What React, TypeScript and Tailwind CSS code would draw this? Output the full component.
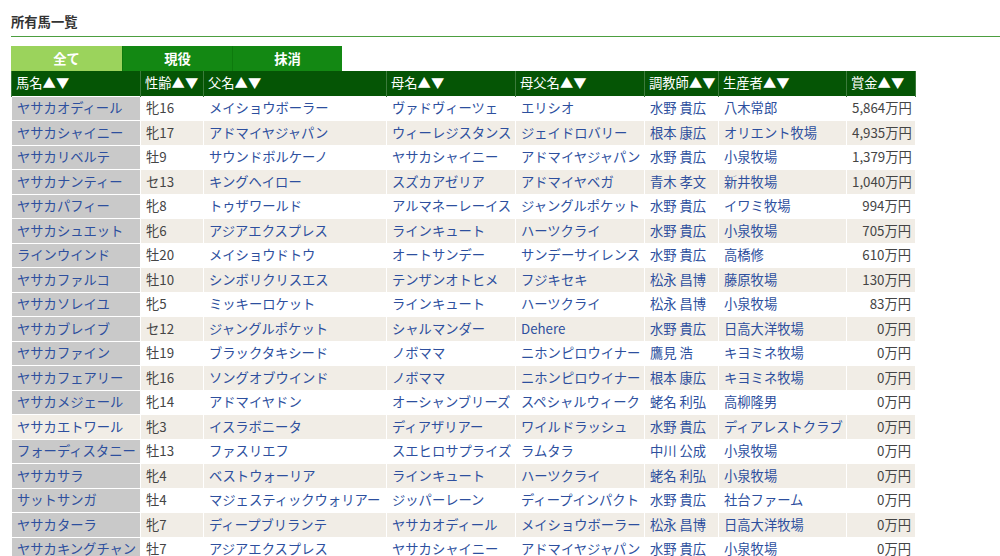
import React from "react";

type Horse = {
  name: string;
  sexAge: string;
  sire: string;
  dam: string;
  damSire: string;
  trainer: string;
  breeder: string;
  prize: string;
  plainName?: boolean;
};

const horses: Horse[] = [
  { name: "ヤサカオディール", sexAge: "牝16", sire: "メイショウボーラー", dam: "ヴァドヴィーツェ", damSire: "エリシオ", trainer: "水野 貴広", breeder: "八木常郎", prize: "5,864万円" },
  { name: "ヤサカシャイニー", sexAge: "牝17", sire: "アドマイヤジャパン", dam: "ウィーレジスタンス", damSire: "ジェイドロバリー", trainer: "根本 康広", breeder: "オリエント牧場", prize: "4,935万円" },
  { name: "ヤサカリベルテ", sexAge: "牡9", sire: "サウンドボルケーノ", dam: "ヤサカシャイニー", damSire: "アドマイヤジャパン", trainer: "水野 貴広", breeder: "小泉牧場", prize: "1,379万円" },
  { name: "ヤサカナンティー", sexAge: "セ13", sire: "キングヘイロー", dam: "スズカアゼリア", damSire: "アドマイヤベガ", trainer: "青木 孝文", breeder: "新井牧場", prize: "1,040万円" },
  { name: "ヤサカパフィー", sexAge: "牝8", sire: "トゥザワールド", dam: "アルマネーレーイス", damSire: "ジャングルポケット", trainer: "水野 貴広", breeder: "イワミ牧場", prize: "994万円" },
  { name: "ヤサカシュエット", sexAge: "牝6", sire: "アジアエクスプレス", dam: "ラインキュート", damSire: "ハーツクライ", trainer: "水野 貴広", breeder: "小泉牧場", prize: "705万円" },
  { name: "ラインウインド", sexAge: "牡20", sire: "メイショウドトウ", dam: "オートサンデー", damSire: "サンデーサイレンス", trainer: "水野 貴広", breeder: "高橋修", prize: "610万円" },
  { name: "ヤサカファルコ", sexAge: "牡10", sire: "シンボリクリスエス", dam: "テンザンオトヒメ", damSire: "フジキセキ", trainer: "松永 昌博", breeder: "藤原牧場", prize: "130万円" },
  { name: "ヤサカソレイユ", sexAge: "牝5", sire: "ミッキーロケット", dam: "ラインキュート", damSire: "ハーツクライ", trainer: "松永 昌博", breeder: "小泉牧場", prize: "83万円" },
  { name: "ヤサカブレイブ", sexAge: "セ12", sire: "ジャングルポケット", dam: "シャルマンダー", damSire: "Dehere", trainer: "水野 貴広", breeder: "日高大洋牧場", prize: "0万円" },
  { name: "ヤサカファイン", sexAge: "牡19", sire: "ブラックタキシード", dam: "ノボママ", damSire: "ニホンピロウイナー", trainer: "鷹見 浩", breeder: "キヨミネ牧場", prize: "0万円" },
  { name: "ヤサカフェアリー", sexAge: "牝16", sire: "ソングオブウインド", dam: "ノボママ", damSire: "ニホンピロウイナー", trainer: "根本 康広", breeder: "キヨミネ牧場", prize: "0万円" },
  { name: "ヤサカメジェール", sexAge: "牝14", sire: "アドマイヤドン", dam: "オーシャンブリーズ", damSire: "スペシャルウィーク", trainer: "蛯名 利弘", breeder: "高柳隆男", prize: "0万円" },
  { name: "ヤサカエトワール", sexAge: "牝3", sire: "イスラボニータ", dam: "ディアザリアー", damSire: "ワイルドラッシュ", trainer: "水野 貴広", breeder: "ディアレストクラブ", prize: "0万円", plainName: true },
  { name: "フォーディスタニー", sexAge: "牡13", sire: "ファスリエフ", dam: "スエヒロサプライズ", damSire: "ラムタラ", trainer: "中川 公成", breeder: "小泉牧場", prize: "0万円" },
  { name: "ヤサカサラ", sexAge: "牝4", sire: "ベストウォーリア", dam: "ラインキュート", damSire: "ハーツクライ", trainer: "蛯名 利弘", breeder: "小泉牧場", prize: "0万円" },
  { name: "サットサンガ", sexAge: "牡4", sire: "マジェスティックウォリアー", dam: "ジッパーレーン", damSire: "ディープインパクト", trainer: "水野 貴広", breeder: "社台ファーム", prize: "0万円" },
  { name: "ヤサカターラ", sexAge: "牝7", sire: "ディープブリランテ", dam: "ヤサカオディール", damSire: "メイショウボーラー", trainer: "松永 昌博", breeder: "日高大洋牧場", prize: "0万円" },
  { name: "ヤサカキングチャン", sexAge: "牡7", sire: "アジアエクスプレス", dam: "ヤサカシャイニー", damSire: "アドマイヤジャパン", trainer: "水野 貴広", breeder: "小泉牧場", prize: "0万円" },
];

// column widths taken from the screenshot
const columns = [
  { label: "馬名", width: "w-[129px]" },
  { label: "性齢", width: "w-[63px]" },
  { label: "父名", width: "w-[183px]" },
  { label: "母名", width: "w-[129px]" },
  { label: "母父名", width: "w-[129px]" },
  { label: "調教師", width: "w-[74px]" },
  { label: "生産者", width: "w-[128px]" },
  { label: "賞金", width: "w-[69px]" },
];

const tabs = [
  { label: "全て", active: true },
  { label: "現役", active: false },
  { label: "抹消", active: false },
];

const cell = "h-[24.5px] p-0 px-[5px] border border-white whitespace-nowrap overflow-hidden";
const link = "text-[#2d4f9e]";

export default function App() {
  return (
    <div className="min-h-screen bg-white text-[13.3px] text-[#444] font-['Noto_Sans_CJK_JP','Noto_Sans',sans-serif]">
      <div className="pl-[11px] pt-[12px]">
        <h2 className="h-[20px] leading-[20px] font-bold text-[#333]">所有馬一覧</h2>
        <div className="mt-[4px] h-px bg-[#4c9e3f]" />

        {/* Tabs */}
        <div className="mt-[9px] flex">
          {tabs.map((tab) => (
            <div
              key={tab.label}
              className={
                tab.active
                  ? "w-[111px] h-[25px] leading-[25px] text-center font-bold text-white bg-[#9bd35c]"
                  : "w-[110px] h-[25px] leading-[25px] text-center font-bold text-white bg-[#138813] border-l border-[#0d7a0d]"
              }
            >
              {tab.label}
            </div>
          ))}
        </div>

        <table className="table-fixed border-collapse w-[904px]">
          <thead>
            <tr className="bg-[#055505] text-white">
              {columns.map((col) => (
                <th
                  key={col.label}
                  className={`${col.width} h-[25px] p-0 px-[4px] text-left font-normal border-x border-[#3b7a3b] whitespace-nowrap`}
                >
                  {col.label}▲▼
                </th>
              ))}
            </tr>
          </thead>
          <tbody>
            {horses.map((h, i) => {
              const rowBg = i % 2 === 0 ? "bg-white" : "bg-[#f1ede6]";
              return (
                <tr key={h.name} className={rowBg}>
                  <td className={`${cell} ${h.plainName ? "" : "bg-[#c9c9c9]"} ${link}`}>{h.name}</td>
                  <td className={cell}>{h.sexAge}</td>
                  <td className={`${cell} ${link}`}>{h.sire}</td>
                  <td className={`${cell} ${link}`}>{h.dam}</td>
                  <td className={`${cell} ${link}`}>{h.damSire}</td>
                  <td className={`${cell} ${link}`}>{h.trainer}</td>
                  <td className={`${cell} ${link}`}>{h.breeder}</td>
                  <td className={`${cell} text-right pr-[4px]`}>{h.prize}</td>
                </tr>
              );
            })}
          </tbody>
        </table>
      </div>
    </div>
  );
}
